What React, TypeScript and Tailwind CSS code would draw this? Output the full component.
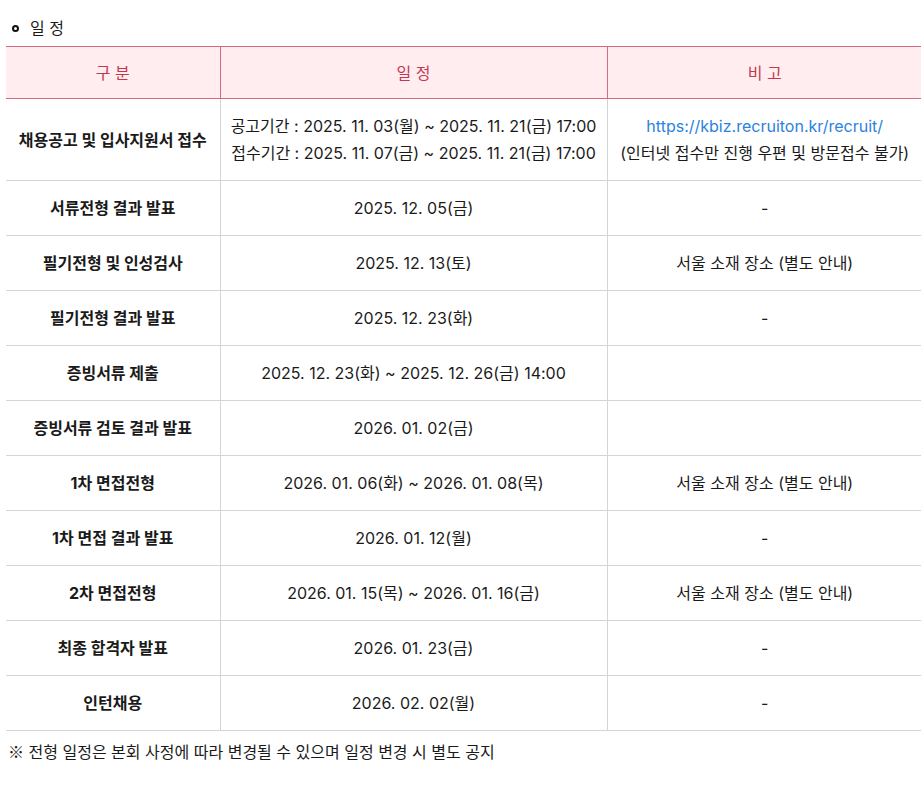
const rows: { label: string; dates: string[]; note: string[]; link?: boolean }[] = [
  {
    label: "채용공고 및 입사지원서 접수",
    dates: [
      "공고기간 : 2025. 11. 03(월) ~ 2025. 11. 21(금) 17:00",
      "접수기간 : 2025. 11. 07(금) ~ 2025. 11. 21(금) 17:00",
    ],
    note: ["https://kbiz.recruiton.kr/recruit/", "(인터넷 접수만 진행 우편 및 방문접수 불가)"],
    link: true,
  },
  { label: "서류전형 결과 발표", dates: ["2025. 12. 05(금)"], note: ["-"] },
  { label: "필기전형 및 인성검사", dates: ["2025. 12. 13(토)"], note: ["서울 소재 장소 (별도 안내)"] },
  { label: "필기전형 결과 발표", dates: ["2025. 12. 23(화)"], note: ["-"] },
  { label: "증빙서류 제출", dates: ["2025. 12. 23(화) ~ 2025. 12. 26(금) 14:00"], note: [] },
  { label: "증빙서류 검토 결과 발표", dates: ["2026. 01. 02(금)"], note: [] },
  { label: "1차 면접전형", dates: ["2026. 01. 06(화) ~ 2026. 01. 08(목)"], note: ["서울 소재 장소 (별도 안내)"] },
  { label: "1차 면접 결과 발표", dates: ["2026. 01. 12(월)"], note: ["-"] },
  { label: "2차 면접전형", dates: ["2026. 01. 15(목) ~ 2026. 01. 16(금)"], note: ["서울 소재 장소 (별도 안내)"] },
  { label: "최종 합격자 발표", dates: ["2026. 01. 23(금)"], note: ["-"] },
  { label: "인턴채용", dates: ["2026. 02. 02(월)"], note: ["-"] },
];

export default function App() {
  return (
    <div
      className="min-h-screen bg-white pt-[16px] text-[#1a1a1a]"
      style={{ fontFamily: 'Inter, "Noto Sans CJK KR", sans-serif' }}
    >
      <div className="flex items-center pl-[12px] text-[16px] leading-[24px] h-[24px]">
        <span className="inline-block w-[7px] h-[7px] rounded-full border-[2px] border-[#111] mr-[11px]"></span>
        <span>일 정</span>
      </div>
      <div className="mt-[6px] pl-[6px] overflow-hidden">
        <table className="table-fixed border-collapse w-[916px] text-[16px]">
          <colgroup>
            <col className="w-[214px]" />
            <col className="w-[387px]" />
            <col className="w-[315px]" />
          </colgroup>
          <thead>
            <tr className="h-[52px] bg-[#ffedf0] text-[#c7364f]">
              <th className="font-normal border border-[#d86a80] border-l-0">구 분</th>
              <th className="font-normal border border-[#d86a80]">일 정</th>
              <th className="font-normal border border-[#d86a80] border-r-0">비 고</th>
            </tr>
          </thead>
          <tbody>
            {rows.map((r, i) => (
              <tr key={i} className={i === 0 ? "h-[82px]" : "h-[55px]"}>
                <td className="border border-[#d4d4d4] border-l-0 text-center font-bold">
                  {r.label}
                </td>
                <td className="border border-[#d4d4d4] text-center leading-[27px]">
                  {r.dates.map((d, j) => (
                    <div key={j}>{d}</div>
                  ))}
                </td>
                <td className="border border-[#d4d4d4] border-r-0 text-center leading-[27px]">
                  {r.note.map((n, j) => (
                    <div key={j} className={r.link && j === 0 ? "text-[#2b82e0]" : ""}>
                      {n}
                    </div>
                  ))}
                </td>
              </tr>
            ))}
          </tbody>
        </table>
      </div>
      <p className="pl-[8px] mt-[8px] text-[16px] leading-[24px]">
        <span style={{ fontFamily: '"Noto Sans CJK KR", sans-serif' }}>※</span> 전형 일정은 본회 사정에 따라 변경될 수 있으며 일정 변경 시 별도 공지
      </p>
    </div>
  );
}
